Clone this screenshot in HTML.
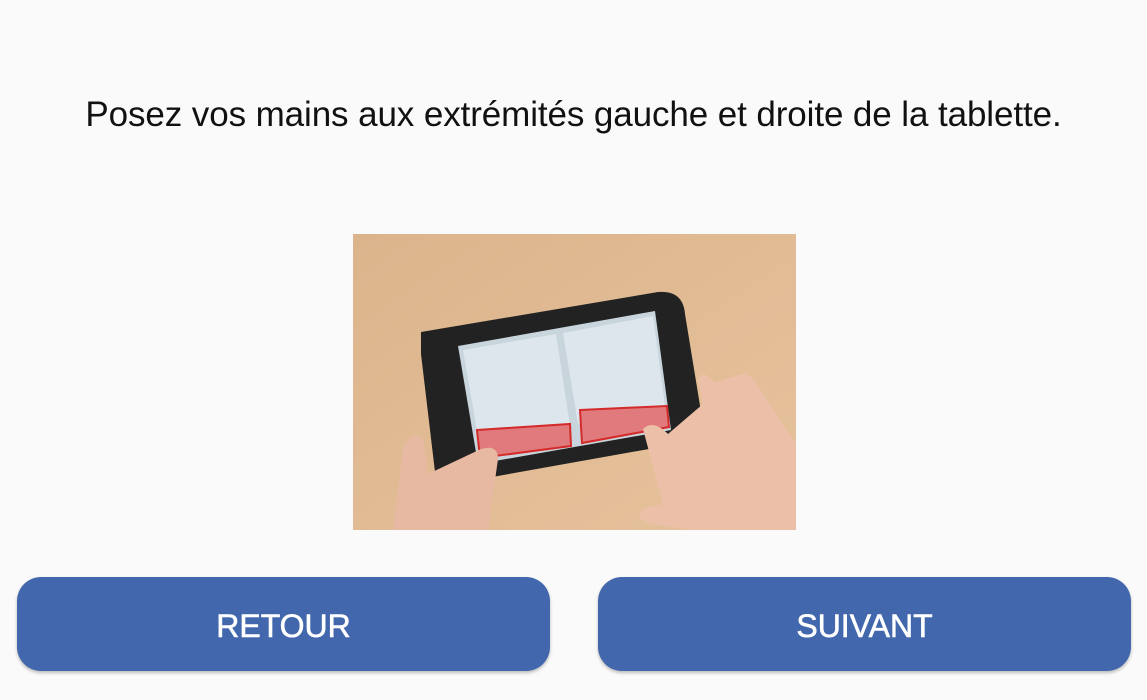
<!DOCTYPE html>
<html><head><style>
body{margin:0;width:1147px;height:700px;background:#fafafa;font-family:"Liberation Sans",sans-serif;position:relative;overflow:hidden}
h1{position:absolute;top:95px;left:0;width:1147px;margin:0;text-align:center;font-weight:normal;font-size:35px;color:#111;letter-spacing:-0.1px}
.b{position:absolute;top:577px;height:94px;width:533px;border-radius:24px;background:#4267ac;color:#fff;font-size:32px;text-align:center;line-height:98px;box-shadow:0 2px 3px rgba(0,0,0,.25);-webkit-text-stroke:0.6px #fff}
</style></head><body>
<h1>Posez vos mains aux extrémités gauche et droite de la tablette.</h1>
<svg style="position:absolute;left:353px;top:234px" width="443" height="296" viewBox="0 0 443 296">
<defs><linearGradient id="w" x1="0" y1="0" x2="1" y2="1"><stop offset="0" stop-color="#dcb48c"/><stop offset="1" stop-color="#e6c29c"/></linearGradient></defs>
<rect width="443" height="296" fill="url(#w)"/>
<path d="M68 98 L305 58 Q330 56 332 80 L350 190 Q352 205 335 208 L100 250 Q85 252 82 238 L68 120 Z" fill="#222"/>
<path d="M105 112 L302 77 L318 196 L125 230 Z" fill="#c8d5dc"/>
<path d="M110 116 L203 100 L219 205 L128 220 Z" fill="#dde6ec"/>
<path d="M210 99 L300 82 L312 172 L225 190 Z" fill="#dde6ec"/>
<path d="M124 196 L217 190 L218 212 L127 224 Z" fill="#e07a7c" stroke="#d42a2a" stroke-width="2"/>
<path d="M227 176 L314 172 L316 193 L229 209 Z" fill="#e07a7c" stroke="#d42a2a" stroke-width="2"/>
<path d="M40 296 L50 215 Q58 195 70 205 L75 240 L128 215 Q145 210 145 225 L135 296 Z" fill="#e8b9a2"/>
<path d="M290 195 Q300 185 315 200 L350 170 L345 145 Q350 135 362 148 L390 140 Q400 140 410 160 L443 210 L443 296 L340 296 L300 290 Q280 285 290 275 L310 270 Z" fill="#ecc0a8"/>
</svg>
<div class="b" style="left:17px">RETOUR</div>
<div class="b" style="left:598px">SUIVANT</div>
</body></html>
